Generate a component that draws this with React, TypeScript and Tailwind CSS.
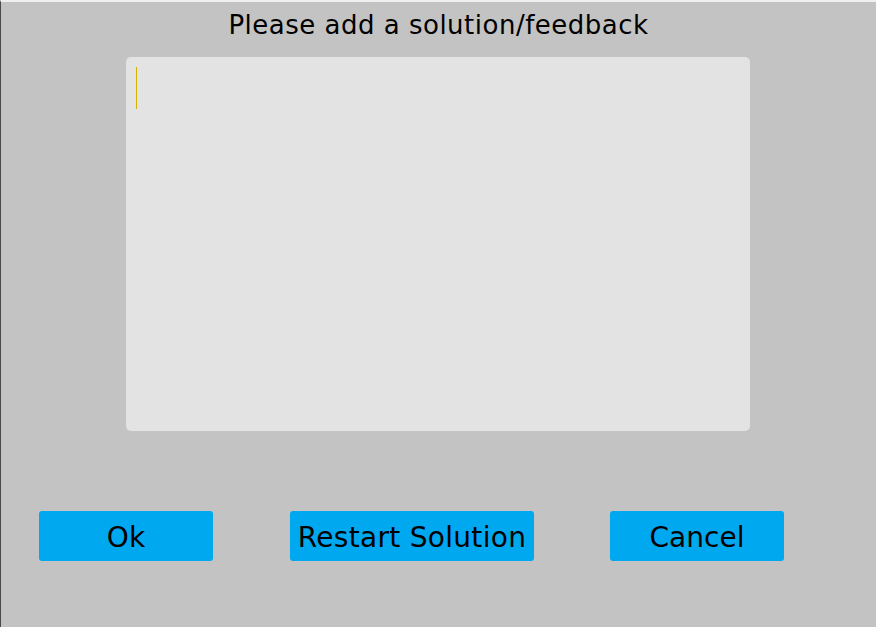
import React from 'react';

const font = { fontFamily: '"Comic Sans MS", "DejaVu Sans", sans-serif' };

const App: React.FC = () => {
  return (
    <div
      style={font}
      className="w-[876px] h-[627px] bg-[#c3c3c3] border-l border-l-[#4a4a4a] border-t-2 border-t-[#f0f0f0] flex flex-col overflow-hidden"
    >
      <h1 className="text-center text-[26px] leading-[32px] text-black mt-[7px] tracking-[0.5px]">
        Please add a solution/feedback
      </h1>

      {/* Feedback box */}
      <div className="ml-[125px] mt-[16px] w-[624px] h-[374px] bg-[#e3e3e3] rounded-[5px] pl-[10px] pt-[10px]">
        <div className="w-[1px] h-[42px] bg-[#d4b400]" />
      </div>

      <div className="flex mt-[80px] ml-[38px]">
        <button className="w-[174px] h-[50px] pt-[3px] bg-[#00a8f0] rounded-[3px] text-[28px] text-black">Ok</button>
        <button className="ml-[77px] w-[244px] h-[50px] pt-[3px] bg-[#00a8f0] rounded-[3px] text-[28px] text-black tracking-[0.3px] whitespace-nowrap">
          Restart Solution
        </button>
        <button className="ml-[76px] w-[174px] h-[50px] pt-[3px] bg-[#00a8f0] rounded-[3px] text-[28px] text-black">Cancel</button>
      </div>
    </div>
  );
};

export default App;
